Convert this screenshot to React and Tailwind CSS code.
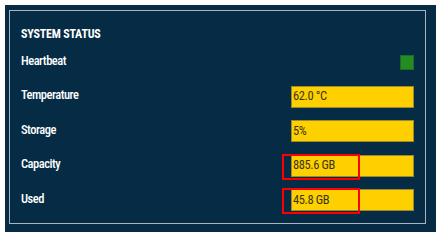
import React from 'react';

const rows = [
  { label: 'Temperature', value: '62.0 °C' },
  { label: 'Storage', value: '5%' },
  { label: 'Capacity', value: '885.6 GB', marked: true },
  { label: 'Used', value: '45.8 GB', marked: true },
];

const font = { fontFamily: '"Roboto Condensed", "Liberation Sans Narrow", Roboto, sans-serif' };

export default function App() {
  return (
    <div className="w-[436px] h-[232px] bg-white pl-[5px] pt-[5px]" style={font}>
      <div className="w-[431px] h-[227px] bg-[#062c45] pl-[4px] pt-[5px]">
        <div className="w-[417px] h-[214px] border border-[#a9b4bd] pl-[11px] pr-[11px]">
          <div className="pt-[15px] h-[34px] text-[12px] leading-[16px] font-bold text-white tracking-[-0.2px]">SYSTEM STATUS</div>
          <div className="flex items-center justify-between h-[34.5px]">
            <span className="text-[12.5px] text-white font-medium tracking-[-0.5px] -mt-[2px]">Heartbeat</span>
            <div className="w-[14px] h-[15px] bg-[#238c23] border border-[#1e6b25]" />
          </div>
          {rows.map((r) => (
            <div key={r.label} className="flex items-center justify-between h-[34.5px]">
              <span className="text-[12.5px] text-white font-medium tracking-[-0.5px] -mt-[2px]">{r.label}</span>
              <div className="relative w-[123px] h-[22px] bg-[#ffd000] border border-[#9c8a2c] flex items-center pl-[1px] text-[12.5px] tracking-[-0.4px] text-[#3a3614]">
                {r.value}
                {r.marked && (
                  <div className="absolute left-[-10px] top-[-2px] w-[78px] h-[26px] border-2 border-[#ff0000]" />
                )}
              </div>
            </div>
          ))}
        </div>
      </div>
    </div>
  );
}
